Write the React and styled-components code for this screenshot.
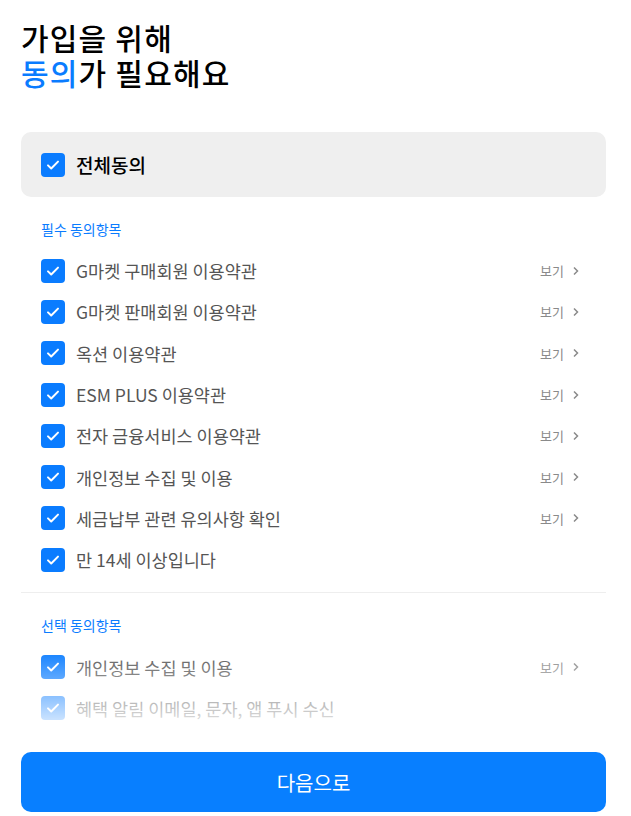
import styled, { createGlobalStyle } from 'styled-components'

const required = [
  'G마켓 구매회원 이용약관',
  'G마켓 판매회원 이용약관',
  '옥션 이용약관',
  'ESM PLUS 이용약관',
  '전자 금융서비스 이용약관',
  '개인정보 수집 및 이용',
  '세금납부 관련 유의사항 확인',
]

const optional = [
  { label: '개인정보 수집 및 이용', view: true },
  { label: '혜택 알림 이메일, 문자, 앱 푸시 수신', view: false },
]

function Check() {
  return (
    <Box>
      <svg width="16" height="16" viewBox="0 0 16 16" fill="none">
        <path d="M3 8.4l3.2 3.1L13 4.6" stroke="#fff" strokeWidth="2" strokeLinecap="round" strokeLinejoin="round" />
      </svg>
    </Box>
  )
}

function Item({ label, view }) {
  return (
    <Row>
      <Check />
      <Label>{label}</Label>
      {view && (
        <View>
          보기
          <svg width="8" height="10" viewBox="0 0 8 10" fill="none">
            <path d="M2 1.5l3.5 3.5L2 8.5" stroke="#8a8a8a" strokeWidth="1.5" />
          </svg>
        </View>
      )}
    </Row>
  )
}

export default function App() {
  return (
    <Wrapper>
      <GlobalStyle />
      <Scroll>
        <Title>
          <TitleLine>가입을 위해</TitleLine>
          <TitleLine>
            <Blue>동의</Blue>가 필요해요
          </TitleLine>
        </Title>
        <AllCard>
          <Check />
          <AllLabel>전체동의</AllLabel>
        </AllCard>
        <Section>
          <SectionTitle>필수 동의항목</SectionTitle>
          {required.map((l) => (
            <Item key={l} label={l} view />
          ))}
          <Row>
            <Check />
            <Label>만 14세 이상입니다</Label>
          </Row>
        </Section>
        <Divider />
        <Section>
          <SectionTitle>선택 동의항목</SectionTitle>
          {optional.map((o) => (
            <Item key={o.label} label={o.label} view={o.view} />
          ))}
        </Section>
        <Fade />
      </Scroll>
      <Footer>
        <NextButton>다음으로</NextButton>
      </Footer>
    </Wrapper>
  )
}

const GlobalStyle = createGlobalStyle`
  body {
    margin: 0;
    background: #fff;
    font-family: "Noto Sans CJK KR", "Noto Sans", sans-serif;
  }
`

const Wrapper = styled.div`
  height: 816px;
  display: flex;
  flex-direction: column;
  overflow: hidden;
`

const Scroll = styled.div`
  position: relative;
  flex: 1;
  padding: 0 25px 0 21px;
  overflow: hidden;
`

const Title = styled.h1`
  margin: 20px 0 0;
  font-size: 30px;
  font-weight: 500;
  color: #000;
  letter-spacing: 1.2px;
`

const TitleLine = styled.div`
  height: 35px;
  line-height: 35px;
`

const Blue = styled.span`
  color: #0a7cff;
`

const AllCard = styled.div`
  margin-top: 42px;
  height: 65px;
  border-radius: 10px;
  background: #efefef;
  display: flex;
  align-items: center;
  padding: 0 20px;
  gap: 11px;
`

const AllLabel = styled.span`
  font-size: 19px;
  font-weight: 500;
  color: #000;
`

const Section = styled.div`
  padding: 0 20px;
`

const SectionTitle = styled.div`
  font-size: 14px;
  color: #0a7cff;
  padding: 22px 0 11px;
  line-height: 20px;
`

const Row = styled.div`
  height: 41.3px;
  display: flex;
  align-items: center;
  gap: 11px;
`

const Box = styled.span`
  width: 24px;
  height: 24px;
  border-radius: 4px;
  background: #0a7cff;
  display: flex;
  align-items: center;
  justify-content: center;
  flex-shrink: 0;
`

const Label = styled.span`
  flex: 1;
  font-size: 17.5px;
  color: #555;
`

const View = styled.span`
  display: flex;
  align-items: center;
  gap: 8px;
  font-size: 13px;
  color: #8a8a8a;
  margin-right: 6px;
`

const Divider = styled.hr`
  border: 0;
  border-top: 1px solid #eee;
  margin: 12px 0 0;
`

const Fade = styled.div`
  position: absolute;
  left: 0;
  right: 0;
  bottom: 0;
  height: 104px;
  background: linear-gradient(rgba(255, 255, 255, 0), #fff 88%);
  pointer-events: none;
`

const Footer = styled.div`
  padding: 0 25px 4px 21px;
  background: #fff;
`

const NextButton = styled.button`
  width: 100%;
  height: 60px;
  border: 0;
  border-radius: 10px;
  background: #087fff;
  color: #fff;
  font-family: inherit;
  font-size: 20px;
  font-weight: 400;
`
